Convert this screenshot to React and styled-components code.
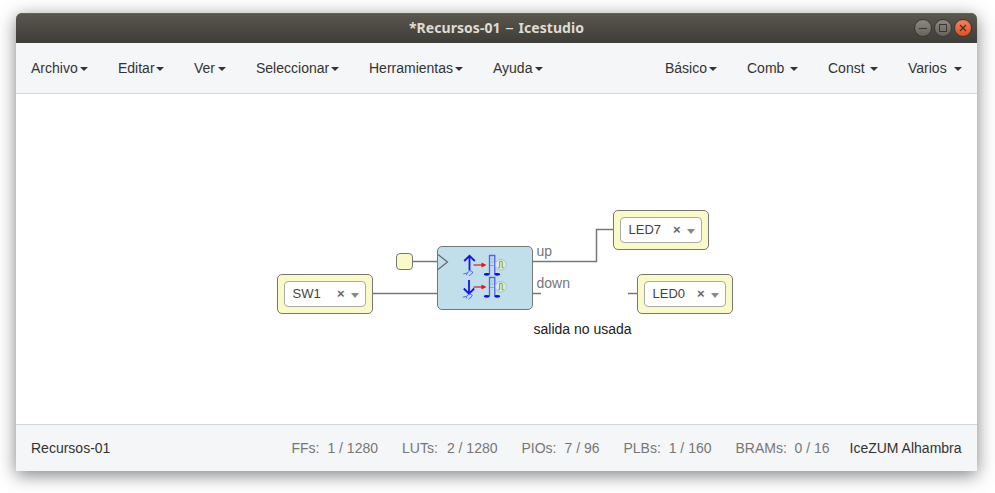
import React from "react";
import styled, { createGlobalStyle } from "styled-components";

const GlobalStyle = createGlobalStyle`
  * { box-sizing: border-box; }
  body { margin: 0; background: #fff; overflow: hidden; }
`;

const Desktop = styled.div`
  width: 995px;
  height: 493px;
  padding: 13px 18px 22px 16px;
  overflow: hidden;
  background: #fff;
  font: 14px/20px "Liberation Sans", Arial, sans-serif;
  color: #333;
`;

const Window = styled.main`
  display: flex;
  flex-direction: column;
  width: 961px;
  height: 458px;
  border-radius: 6px 6px 0 0;
  box-shadow: 0 4px 18px rgba(0, 0, 0, 0.5);
`;

const TitleBar = styled.header`
  display: grid;
  grid-template-columns: 1fr auto 1fr;
  align-items: center;
  height: 30px;
  flex: none;
  padding: 0 5px;
  border-radius: 6px 6px 0 0;
  background: linear-gradient(#5a574d, #3e3d38);
  box-shadow: inset 0 1px #65635a;
`;

const Title = styled.h1`
  grid-column: 2;
  margin: 0;
  font: 700 14px/30px "Noto Sans", sans-serif;
  letter-spacing: 0.05px;
  color: #dfdbd2;
  white-space: nowrap;
`;

const Dash = styled.span`
  margin: 0 1px;
  font-weight: 400;
  font-size: 17px;
  line-height: 1;
`;

const Controls = styled.div`
  display: flex;
  justify-content: flex-end;
  gap: 2px;
`;

const ControlButton = styled.button`
  display: grid;
  place-items: center;
  width: 18px;
  height: 18px;
  padding: 0;
  border: 1px solid #383732;
  border-radius: 50%;
  color: #36352f;
  background: ${(p) =>
    p.$close ? "linear-gradient(#f5805b, #e2501d)" : "linear-gradient(#8b8981, #65635b)"};
`;

const NavBar = styled.nav`
  display: flex;
  align-items: flex-start;
  justify-content: space-between;
  height: 51px;
  flex: none;
  padding: 15px 15px 0;
  border-bottom: 1px solid #d3d8dc;
  background: #f5f6f8;
`;

const MenuGroup = styled.div`
  display: flex;
  gap: 30px;
`;

const MenuItem = styled.a`
  display: flex;
  align-items: center;
  justify-content: space-between;
  width: ${(p) => p.$width}px;
  white-space: pre;
`;

const Caret = styled.span`
  width: 8px;
  height: 4px;
  margin-top: 2px;
  border: 4px solid transparent;
  border-top-color: #333;
  border-bottom: 0;
`;

const Canvas = styled.section`
  position: relative;
  flex: 1;
  background: #fff;
  overflow: hidden;
`;

const Wires = styled.svg`
  position: absolute;
  inset: 0;
`;

const Placed = styled.div`
  position: absolute;
  left: ${(p) => p.$x}px;
  top: ${(p) => p.$y}px;
`;

const PinBlock = styled(Placed)`
  width: 96px;
  height: 40px;
  padding: 6px;
  border: 1px solid #777;
  border-radius: 5px;
  background: #fafac8;
`;

const PinSelect = styled.div`
  display: flex;
  align-items: center;
  height: 26px;
  padding: 0 6px 0 7.5px;
  border: 1px solid #aaa;
  border-radius: 4px;
  background: #fff;
  font-size: 13px;
  line-height: 24px;
  color: #444;
`;

const PinName = styled.span`
  flex: 1;
`;

const Clear = styled.span`
  width: 8px;
  margin: -1px 6px 0 0;
  font-weight: 700;
  color: #666;
`;

const SelectArrow = styled.span`
  width: 8px;
  height: 5px;
  margin-top: 2px;
  border: 4px solid transparent;
  border-top: 5px solid #888;
  border-bottom: 0;
`;

const ClockPort = styled(Placed)`
  width: 17px;
  height: 17px;
  border: 1px solid #777;
  border-radius: 4px;
  background: #fafac8;
`;

const EdgeBlock = styled(Placed)`
  width: 96px;
  height: 64px;
  border: 1px solid #777;
  border-radius: 5px;
  background: #c0dfeb;
  & > svg { display: block; }
`;

const Label = styled(Placed)`
  line-height: 16px;
  white-space: nowrap;
  color: ${(p) => (p.$strong ? "#222" : "#777")};
`;

const Footer = styled.footer`
  display: flex;
  height: 47px;
  flex: none;
  padding: 13px 15px 0;
  border-top: 1px solid #d3d8dc;
  background: #f5f6f8;
  white-space: pre;
`;

const Project = styled.span`
  flex: 1;
`;

const Stats = styled.div`
  display: flex;
  gap: 24px;
  margin-right: 20px;
  color: #777;
`;

const Stat = styled.span`
  display: flex;
  justify-content: space-between;
  width: ${(p) => p.$width}px;
`;

const Board = styled.span`
  width: 112.5px;
`;

const menusLeft = [
  ["Archivo", 57], ["Editar", 46], ["Ver", 32],
  ["Seleccionar", 83], ["Herramientas", 94], ["Ayuda", 50],
];
const menusRight = [["Básico", 52], ["Comb", 51], ["Const", 50], ["Varios", 54]];
const stats = [
  ["FFs:", "1 / 1280", 86.5], ["LUTs:", "2 / 1280", 95.5], ["PIOs:", "7 / 96", 78],
  ["PLBs:", "1 / 160", 88], ["BRAMs:", "0 / 16", 94],
];
const pins = [
  { name: "SW1", x: 261, y: 180 },
  { name: "LED7", x: 597, y: 116 },
  { name: "LED0", x: 621, y: 180 },
];

const Menus = ({ items }) => (
  <MenuGroup>
    {items.map(([label, width]) => (
      <MenuItem key={label} $width={width}>{label}<Caret /></MenuItem>
    ))}
  </MenuGroup>
);

const Detector = ({ y, down }) => (
  <g transform={`translate(0 ${y})`} fill="none">
    <g stroke="#1414f0" strokeWidth="1.8">
      {down ? <path d="M14 2.5V16M8.8 11L14 16.2L19.2 11" /> : <path d="M14.5 15V0.5M9.2 5.5L14.5 0.3L19.8 5.5" />}
    </g>
    <path d="M8.3 18.5L12 17.6L15 15L17.8 16.5L16.7 18.5L14 20.3M12.3 17.5L11.5 19.8" stroke="#4a60ea" strokeWidth=".9"
      transform={down ? "translate(-0.5 1.2)" : undefined} />
    <path d="M18.5 9.5h9" stroke="#f02020" strokeWidth="1.3" />
    <path d="M26.5 7l5 2.5-5 2.5z" fill="#f01010" />
    <path d="M34.5 18.5V0H39.8V18.5" stroke="#4c63ef" strokeWidth="1.3" />
    <path d="M36 3.5h.8M37.8 3.5h.8M36 6l1 1 1.5-1M35 10h4.5" stroke="#7188e4" strokeWidth=".7" />
    <ellipse cx="31.8" cy="18.8" rx="3" ry="1.4" fill="#0808f3" />
    <ellipse cx="42.2" cy="18.8" rx="3" ry="1.4" fill="#0808f3" />
    <circle cx="45.8" cy="9.2" r="5.4" fill="#dfe9df" stroke="#a3b8a6" strokeWidth=".7" />
    <path d="M43 12.3h1.6V5.8h2.6v6.5h1.6" stroke="#62ad62" strokeWidth="1" />
  </g>
);

export default function App() {
  return (
    <Desktop>
      <GlobalStyle />
      <Window>
        <TitleBar>
          <Title>*Recursos-01 <Dash>–</Dash> Icestudio</Title>
          <Controls>
            <ControlButton aria-label="Minimizar">
              <svg width="10" height="10" stroke="currentColor"><path d="M1 5.5h8" /></svg>
            </ControlButton>
            <ControlButton aria-label="Maximizar">
              <svg width="10" height="10" stroke="currentColor" fill="none"><path d="M1.5 1.5h7v7h-7z" /></svg>
            </ControlButton>
            <ControlButton aria-label="Cerrar" $close>
              <svg width="10" height="10" stroke="currentColor" strokeWidth="1.3"><path d="M2 2l6 6M8 2l-6 6" /></svg>
            </ControlButton>
          </Controls>
        </TitleBar>
        <NavBar>
          <Menus items={menusLeft} />
          <Menus items={menusRight} />
        </NavBar>
        <Canvas>
          <Wires width="961" height="330" fill="none" stroke="#777" strokeWidth="1.5">
            <path d="M397 167.5H422M356 199.5H422M516 167.5H580.5V135.5H598M516 199.5H525M612 199.5H622" />
          </Wires>
          {pins.map((pin) => (
            <PinBlock key={pin.name} $x={pin.x} $y={pin.y}>
              <PinSelect>
                <PinName>{pin.name}</PinName>
                <Clear>×</Clear>
                <SelectArrow />
              </PinSelect>
            </PinBlock>
          ))}
          <ClockPort $x={380} $y={159} />
          <EdgeBlock $x={421} $y={152}>
            <svg width="94" height="62" viewBox="0 0 94 62">
              <path d="M0 7.5L9.5 15L0 22.5" fill="none" stroke="#666" strokeWidth="1.2" />
              <g transform="translate(17 1)">
                <Detector y={7.5} />
                <Detector y={29.5} down />
              </g>
            </svg>
          </EdgeBlock>
          <Label $x={520.5} $y={149}>up</Label>
          <Label $x={520.5} $y={181}>down</Label>
          <Label $x={517.5} $y={227} $strong>salida no usada</Label>
        </Canvas>
        <Footer>
          <Project>Recursos-01</Project>
          <Stats>
            {stats.map(([name, value, width]) => (
              <Stat key={name} $width={width}>
                <span>{name}</span>
                <span>{value}</span>
              </Stat>
            ))}
          </Stats>
          <Board>IceZUM Alhambra</Board>
        </Footer>
      </Window>
    </Desktop>
  );
}
